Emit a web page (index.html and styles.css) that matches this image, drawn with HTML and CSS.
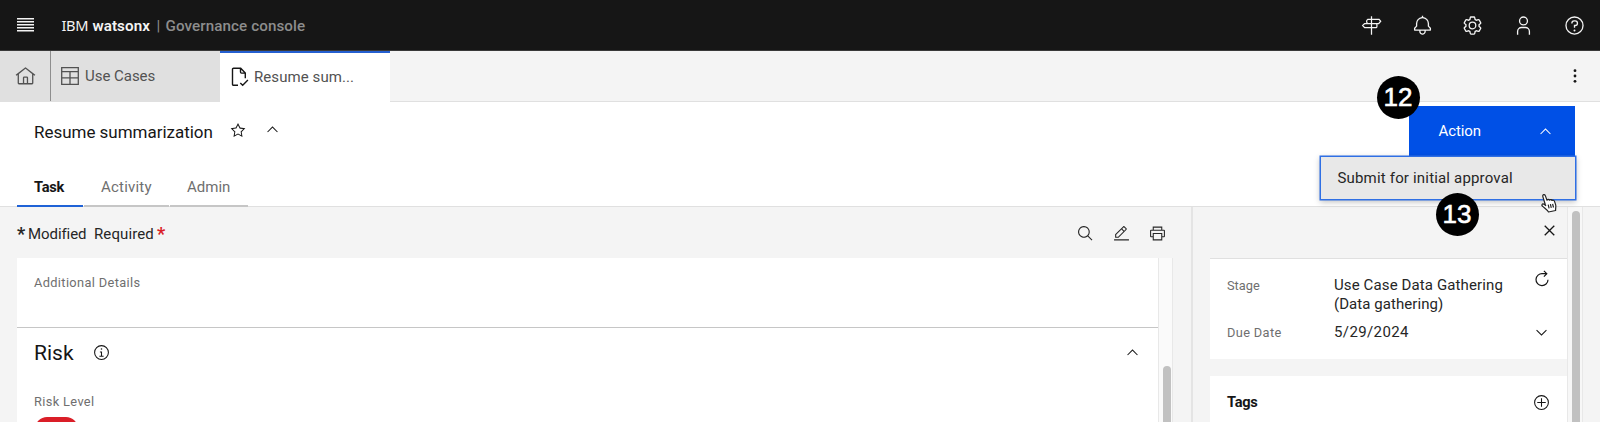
FILE: index.html
```html
<!DOCTYPE html>
<html lang="en">
<head>
<meta charset="utf-8">
<title>IBM watsonx Governance console</title>
<link rel="stylesheet" href="styles.css">
</head>
<body>
<header class="header">
  <button class="menu-btn" aria-label="Menu"><svg class="menu-icon" viewBox="0 0 17 14"><path d="M0 0h17v1.500H0zM0 3h17v1.500H0zM0 6h17v1.500H0zM0 9h17v1.500H0zM0 12h17v1.500H0z"/></svg></button>
  <div class="brand"><span class="ibm">IBM</span><b class="watsonx">watsonx</b><span class="bar">|</span><span class="product">Governance console</span></div>
  <nav class="header-icons">
    <svg viewBox="0 0 32 32"><path class="line" d="M16 2v28M16 6.500H27.500L30 9.500 27 13H10.500Q8.500 12 8.500 9.800T10.500 6.500H16M24 13Q25 19.300 23 19.300H5.500L2.500 16 5.500 13H10.500"/></svg>
    <svg viewBox="0 0 32 32"><path d="M28.707 19.293 26 16.586V13a10.014 10.014 0 0 0-9-9.949V1h-2v2.051A10.014 10.014 0 0 0 6 13v3.586l-2.707 2.707A1 1 0 0 0 3 20v3a1 1 0 0 0 1 1h7v.777a5.152 5.152 0 0 0 4.500 5.199A5.006 5.006 0 0 0 21 25v-1h7a1 1 0 0 0 1-1v-3a1 1 0 0 0-.293-.707ZM19 25a3 3 0 0 1-6 0v-1h6Zm8-3H5v-1.586l2.707-2.707A1 1 0 0 0 8 17v-4a8 8 0 0 1 16 0v4a1 1 0 0 0 .293.707L27 20.414Z"/></svg>
    <svg viewBox="0 0 32 32"><path d="M27 16.760c0-.25 0-.5 0-.76s0-.51 0-.77l1.920-1.680A2 2 0 0 0 29.300 11L26.940 7a2 2 0 0 0-1.730-1 2 2 0 0 0-.64.1l-2.430.82a11.350 11.350 0 0 0-1.310-.75l-.51-2.520a2 2 0 0 0-2-1.610H13.640a2 2 0 0 0-2 1.610l-.51 2.520a11.480 11.480 0 0 0-1.320.75L7.430 6.060A2 2 0 0 0 6.790 6 2 2 0 0 0 5.060 7L2.700 11a2 2 0 0 0 .41 2.510L5 15.240c0 .25 0 .5 0 .76s0 .51 0 .77L3.110 18.450A2 2 0 0 0 2.700 21L5.060 25a2 2 0 0 0 1.730 1 2 2 0 0 0 .64-.1l2.430-.82a11.350 11.350 0 0 0 1.310.75l.51 2.520a2 2 0 0 0 2 1.610h4.720a2 2 0 0 0 2-1.610l.51-2.520a11.480 11.480 0 0 0 1.320-.75l2.420.82a2 2 0 0 0 .64.1 2 2 0 0 0 1.730-1L29.300 21a2 2 0 0 0-.41-2.510ZM25.210 24l-3.430-1.160a8.860 8.860 0 0 1-2.710 1.570L18.360 28H13.640l-.71-3.550a9.360 9.360 0 0 1-2.700-1.570L6.790 24 4.430 20l2.720-2.400a8.900 8.900 0 0 1 0-3.130L4.430 12 6.790 8l3.430 1.160a8.860 8.860 0 0 1 2.710-1.570L13.640 4h4.720l.71 3.550a9.360 9.360 0 0 1 2.700 1.570L25.210 8 27.570 12l-2.720 2.400a8.900 8.900 0 0 1 0 3.130L27.570 20ZM16 22a6 6 0 1 1 6-6 5.940 5.940 0 0 1-6 6Zm0-10a3.910 3.910 0 0 0-4 4 3.910 3.910 0 0 0 4 4 3.910 3.910 0 0 0 4-4 3.910 3.910 0 0 0-4-4Z"/></svg>
    <svg viewBox="0 0 32 32"><path d="M16 4a5 5 0 1 1-5 5 5 5 0 0 1 5-5m0-2a7 7 0 1 0 7 7 7 7 0 0 0-7-7ZM26 30h-2v-5a5 5 0 0 0-5-5h-6a5 5 0 0 0-5 5v5H6v-5a7 7 0 0 1 7-7h6a7 7 0 0 1 7 7Z"/></svg>
    <svg viewBox="0 0 32 32"><path d="M16 2a14 14 0 1 0 14 14A14 14 0 0 0 16 2Zm0 26a12 12 0 1 1 12-12 12 12 0 0 1-12 12ZM17 8h-1.500A4.490 4.490 0 0 0 11 12.500V13h2v-.5A2.500 2.500 0 0 1 15.500 10H17a2.500 2.500 0 0 1 0 5h-2v4.500h2V17a4.500 4.500 0 0 0 0-9Z"/><circle cx="16" cy="23.500" r="1.500"/></svg>
  </nav>
</header>

<div class="tabs">
  <div class="tab home"><svg viewBox="0 0 32 32"><path d="M16.612 2.214a1.010 1.010 0 0 0-1.243 0L1 13.419l1.243 1.572L4 13.621V26a2.004 2.004 0 0 0 2 2H26a2.004 2.004 0 0 0 2-2V13.630L29.757 15 31 13.428ZM18 26h-4v-8h4Zm2 0v-8a2.002 2.002 0 0 0-2-2h-4a2.002 2.002 0 0 0-2 2v8H6V12.062l10-7.790 10 7.800V26Z"/></svg></div>
  <div class="tab cases"><svg viewBox="0 0 18 18"><path class="line thin" d="M.7.7h16.600v16.600H.7zM.7 4.700h16.600M.7 10.800h16.600M9 4.700v12.600"/></svg><span>Use Cases</span></div>
  <div class="tab current"><svg viewBox="0 0 18 20"><path class="line doc" d="M7 18.300H2.500a1 1 0 0 1-1-1V2.200a1 1 0 0 1 1-1h7.200L14.300 6v5.300M9.500 1.200v3.900a1 1 0 0 0 1 1h3.800M9.300 15.900l2.400 2.400 5.200-5.200"/></svg><span>Resume sum...</span></div>
  <svg class="overflow" viewBox="0 0 4 14"><circle cx="2" cy="1.700" r="1.400"/><circle cx="2" cy="7" r="1.400"/><circle cx="2" cy="12.300" r="1.400"/></svg>
</div>

<section class="page-head">
  <div class="title-row">
    <h1>Resume summarization</h1>
    <svg class="star" viewBox="0 0 32 32"><path d="m16 6.520 2.760 5.580.46 1 1 .15 6.160.89L22 18.440l-.75.73.18 1 1.050 6.130-5.510-2.890L16 23l-.93.49-5.510 2.850 1-6.130.18-1L10 18.440 5.580 14.090l6.160-.89 1-.15.46-1L16 6.520M16 2l-4.550 9.220L1.280 12.690l7.360 7.180L6.900 30 16 25.220 25.100 30 23.360 19.870l7.360-7.170L20.550 11.220Z"/></svg>
    <svg class="chev" viewBox="0 0 32 32"><path d="M16 10 26 20l-1.400 1.400-8.600-8.600-8.600 8.600L6 20z"/></svg>
  </div>
  <nav class="subtabs">
    <a class="sub selected">Task</a><a class="sub activity">Activity</a><a class="sub admin">Admin</a>
  </nav>
  <div class="action">
    <button class="action-btn"><span>Action</span><svg viewBox="0 0 32 32"><path d="M16 10 26 20l-1.400 1.400-8.600-8.600-8.600 8.600L6 20z"/></svg></button>
    <div class="action-menu">Submit for initial approval</div>
  </div>
</section>

<main class="content">
  <section class="left">
    <div class="toolbar">
      <span class="star-mark">*</span><span class="modified">Modified</span><span class="required">Required</span><span class="req-mark">*</span>
      <div class="tools">
        <svg viewBox="0 0 32 32"><path d="m29 27.586-7.552-7.552a11.018 11.018 0 1 0-1.414 1.414L27.586 29ZM4 13a9 9 0 1 1 9 9 9.010 9.010 0 0 1-9-9Z"/></svg>
        <svg viewBox="0 0 32 32"><path d="M2 27h28v2H2zM25.400 9c.8-.8.8-2 0-2.800l-3.600-3.600c-.8-.8-2-.8-2.800 0l-15 15V24h6.400l15-15zm-5-5L24 7.600l-3 3L17.400 7l3-3zM6 22v-3.600l10-10 3.600 3.600-10 10H6z"/></svg>
        <svg viewBox="0 0 32 32"><path d="M28 9h-3V3H7v6H4a2 2 0 0 0-2 2v10a2 2 0 0 0 2 2h3v6h18v-6h3a2 2 0 0 0 2-2V11a2 2 0 0 0-2-2ZM9 5h14v4H9Zm14 22H9V17h14Zm5-6h-3v-6H7v6H4V11h24Z"/></svg>
      </div>
    </div>
    <div class="form-wrap">
      <div class="form">
        <div class="details"><span class="label details-label">Additional Details</span></div>
        <div class="risk-head"><h2>Risk</h2><svg class="info" viewBox="0 0 32 32"><path d="M17 22v-8h-4v2h2v6h-3v2h8v-2h-3zM16 8a1.500 1.500 0 1 0 1.500 1.500A1.500 1.500 0 0 0 16 8ZM16 30a14 14 0 1 1 14-14 14 14 0 0 1-14 14Zm0-26a12 12 0 1 0 12 12A12 12 0 0 0 16 4Z"/></svg><svg class="chev end" viewBox="0 0 32 32"><path d="M16 10 26 20l-1.400 1.400-8.600-8.600-8.600 8.600L6 20z"/></svg></div>
        <div class="risk-level"><span class="label">Risk Level</span><span class="pill"></span></div>
      </div>
      <div class="track"><div class="thumb"></div></div>
    </div>
  </section>
  <aside class="right">
    <div class="side">
      <div class="side-top"><svg viewBox="0 0 32 32"><path d="M17.414 16 24 9.414 22.586 8 16 14.586 9.414 8 8 9.414 14.586 16 8 22.586 9.414 24 16 17.414 22.586 24 24 22.586z"/></svg></div>
      <div class="card stage-card">
        <span class="label stage-label">Stage</span>
        <span class="value"><span class="gathering">Use Case Data Gathering</span><br>(Data gathering)</span>
        <svg class="refresh" viewBox="0 0 16 18"><path class="line" d="M8.500 3.700A6 6 0 1 0 14 9.800M8 3.700h4.600M9.900.8l2.900 2.900-2.900 2.900"/></svg>
        <span class="label due-label">Due Date</span>
        <span class="value date">5/29/2024</span>
        <svg class="down" viewBox="0 0 32 32"><path d="M16 22 6 12l1.400-1.400 8.600 8.600 8.600-8.600L26 12z"/></svg>
      </div>
      <div class="card tags-card"><h3>Tags</h3><svg viewBox="0 0 32 32"><path d="M16 4A12 12 0 1 1 4 16 12 12 0 0 1 16 4m0-2a14 14 0 1 0 14 14A14 14 0 0 0 16 2ZM24 15h-7V8h-2v7H8v2h7v7h2v-7h7z"/></svg></div>
    </div>
    <div class="page-track"><div class="page-thumb"></div></div>
  </aside>
</main>

<span class="badge step-12">12</span>
<span class="badge step-13">13</span>
<svg class="cursor" viewBox="0 0 18 20"><path d="M5.200 11.200 2.800 3.500C2.200 1.500 4.600.8 5.300 2.600L7 7.200c.5-1 2-1.100 2.500 0 .6-.8 2.100-.8 2.500.3.800-.6 2.100-.3 2.500.9l1.200 3.500c.5 1.700-.3 3.500-.1 5.600l-7.100 1.500c-1.100-2.200-3.300-3.500-5.700-5.600C.8 12 2.400 10.500 3.700 11.100l2 1.500Z"/><path class="fingers" d="m8.200 11.600.9 3.700m1.300-4.100.9 3.700m1.300-4.100.9 3.700"/></svg>
</body>
</html>
```
FILE: styles.css
```css
* { box-sizing: border-box; }
body {
  margin: 0;
  width: 1600px;
  height: 422px;
  overflow: hidden;
  position: relative;
  display: flex;
  flex-direction: column;
  background: #fff;
  color: #161616;
  font: 15px/20px Roboto, "IBM Plex Sans", sans-serif;
}
svg { display: block; flex: none; fill: currentColor; }
button { border: 0; padding: 0; background: none; color: inherit; font: inherit; }
h1, h2, h3 { margin: 0; font-weight: 400; }
.line { fill: none; stroke: currentColor; stroke-width: 1.9; }
.thin { stroke-width: 1.3; }

.header {
  height: 51px;
  flex: none;
  display: flex;
  align-items: center;
  background: #161616;
  border-bottom: 1px solid #393939;
  color: #f4f4f4;
}
.menu-btn { width: 51px; display: flex; justify-content: center; }
.menu-icon { width: 17px; height: 14px; }
.brand { display: flex; align-items: baseline; padding: 0 0 0 10.500px; font-size: 15.2px; }
.ibm { width: 31px; font-family: "Noto Sans", sans-serif; font-size: 14.6px; letter-spacing: -0.35px; }
.watsonx { width: 62px; font-weight: 600; letter-spacing: .05px; }
.bar { width: 11px; padding-left: 2px; color: #8d8d8d; }
.product { color: #8d8d8d; font-weight: 500; letter-spacing: .087px; }
.header-icons { margin-left: auto; display: flex; gap: 29.8px; padding-right: 15px; }
.header-icons svg { width: 21px; height: 21px; }

.tabs {
  height: 51px;
  flex: none;
  display: flex;
  background: #f4f4f4;
  border-bottom: 1px solid #e0e0e0;
  color: #525252;
}
.tab { display: flex; align-items: center; background: #e0e0e0; }
.home { width: 51px; justify-content: center; border-right: 1px solid #8d8d8d; }
.home svg { width: 21px; height: 21px; }
.cases { width: 169px; padding-left: 10px; gap: 6px; letter-spacing: -.03px; }
.cases svg { width: 18px; height: 18px; }
.current { width: 170px; height: 51px; padding: 0 0 1px 11px; gap: 5px; background: #fff; border-top: 2px solid #245fd0; letter-spacing: .08px; }
.current svg { width: 18px; height: 20px; color: #161616; }
.doc { stroke-width: 1.4; }
.overflow { width: 4px; height: 14px; margin: 18px 23.500px 0 auto; color: #161616; }

.page-head {
  height: 105px;
  flex: none;
  position: relative;
  border-bottom: 1px solid #e0e0e0;
}
.title-row { height: 59px; display: flex; align-items: center; padding-left: 34px; }
h1 { width: 196px; font-size: 17px; line-height: 22px; letter-spacing: -.024px; }
.star { width: 16px; height: 16px; margin-top: -3px; }
.chev { width: 17px; height: 17px; margin: -4px 0 0 18px; }
.subtabs { display: flex; padding-left: 17px; gap: 1px; }
.sub { width: 85px; height: 46px; padding: 16px 0 0 17px; border-bottom: 2px solid #c6c6c6; color: #6f6f6f; letter-spacing: .21px; }
.selected { width: 66px; border-color: #1f62d6; color: #161616; font-weight: 700; font-size: 14.6px; letter-spacing: -.3px; }
.admin { width: 78px; letter-spacing: 0; }
.action { position: absolute; top: 4px; right: 24.500px; display: flex; flex-direction: column; align-items: flex-end; }
.action-btn { width: 166px; height: 50px; margin-right: 1px; padding: 0 21px 0 30px; display: flex; align-items: center; justify-content: space-between; background: #0050e6; color: #fff; letter-spacing: -.1px; }
.action-btn svg { width: 17px; height: 17px; }
.action-menu { width: 256px; height: 44px; padding: 11px 0 0 17px; background: #e8e8e8; border: 1px solid #2f6fe4; box-shadow: 0 0 0 .5px #2f6fe4, 0 2px 6px rgba(0, 0, 0, .25); letter-spacing: .175px; color: #262626; }

.content { flex: 1; min-height: 0; display: flex; overflow: hidden; background: #f4f4f4; }
.left { width: 1193px; display: flex; flex-direction: column; padding: 0 18px 0 17px; border-right: 2px solid #e4e4e4; }
.toolbar { height: 51px; flex: none; display: flex; align-items: center; padding-top: 2px; color: #262626; }
.star-mark { width: 11px; font-weight: 700; font-size: 18px; line-height: 16px; }
.modified { width: 66px; letter-spacing: -.075px; }
.required { width: 63px; letter-spacing: .1px; }
.req-mark { color: #da1e28; font-weight: 700; font-size: 18px; line-height: 16px; }
.tools { margin-left: auto; display: flex; gap: 19px; padding-right: 7px; }
.tools svg { width: 17px; height: 17px; }
.form-wrap { flex: 1; min-height: 0; display: flex; }
.form { flex: 1; background: #fff; }
.label { color: #6f6f6f; font-size: 12.800px; line-height: 18px; letter-spacing: .36px; }
.details { height: 70px; padding: 14px 17px; border-bottom: 1px solid #c6c6c6; }
.risk-head { height: 50px; display: flex; align-items: center; padding-left: 17px; }
h2 { width: 59px; font-size: 21px; line-height: 28px; letter-spacing: 0; }
.info { width: 17px; height: 17px; margin-top: -1px; }
.end { margin: -2px 17px 0 auto; }
.risk-level { display: flex; flex-direction: column; padding: 15px 17px 0; }
.pill { width: 43px; height: 24px; margin: 5.500px 0 0 1px; border-radius: 12px; background: #da1e28; }
.track { width: 15px; padding: 108px 2px 0 3.500px; background: #fafafa; border: solid #e8e8e8; border-width: 0 1px; }
.thumb { height: 100px; width: 8.500px; border-radius: 5px; background: #c1c1c1; }

.right { flex: 1; display: flex; }
.side { width: 374px; padding-left: 17px; display: flex; flex-direction: column; }
.side-top { height: 51px; flex: none; display: flex; justify-content: flex-end; padding: 13px 7.500px 0 0; }
.side-top svg { width: 21px; height: 21px; }
.card { background: #fff; }
.stage-card { height: 101px; flex: none; padding: 17px 0 0 17px; border-top: 1px solid #e0e0e0; display: grid; grid-template-columns: 107px 198px 18px; grid-template-rows: 46px 20px; }
.stage-label { padding-top: 1px; letter-spacing: .017px; }
.due-label { padding-top: 2px; }
.value { line-height: 19px; color: #262626; letter-spacing: .062px; }
.gathering { letter-spacing: .12px; }
.date { padding-top: 1px; letter-spacing: .38px; }
.refresh { width: 16px; height: 18px; margin: -6px 0 0 2px; }
.refresh .line { stroke-width: 1.2; }
.down { width: 17px; height: 17px; margin: 2px 0 0 1px; }
.tags-card { flex: none; height: 60px; margin-top: 17px; padding: 16px 17px; display: flex; justify-content: space-between; }
h3 { font-size: 14.600px; line-height: 20px; font-weight: 700; letter-spacing: -.3px; }
.tags-card svg { width: 17px; height: 17px; margin-top: 2px; }
.page-track { width: 16px; height: 215px; padding: 3.500px 0 0 3.500px; background: #f7f7f7; border: solid #e8e8e8; border-width: 0 1px; }
.page-thumb { width: 8.500px; height: 230px; border-radius: 5px; background: #c1c1c1; }

.badge {
  position: absolute;
  width: 43px;
  height: 43px;
  border-radius: 50%;
  background: #000;
  color: #fff;
  font: 26px/43px "Liberation Sans", Arial, sans-serif;
  text-align: center;
  -webkit-text-stroke: .6px #fff;
}
.step-12 { left: 1376.500px; top: 75.500px; }
.step-13 { left: 1435.500px; top: 193px; }
.cursor { position: absolute; left: 1540px; top: 193px; width: 18px; height: 20px; fill: #fff; stroke: #222; stroke-width: 1.2; stroke-linejoin: round; }
.fingers { fill: none; }
```
